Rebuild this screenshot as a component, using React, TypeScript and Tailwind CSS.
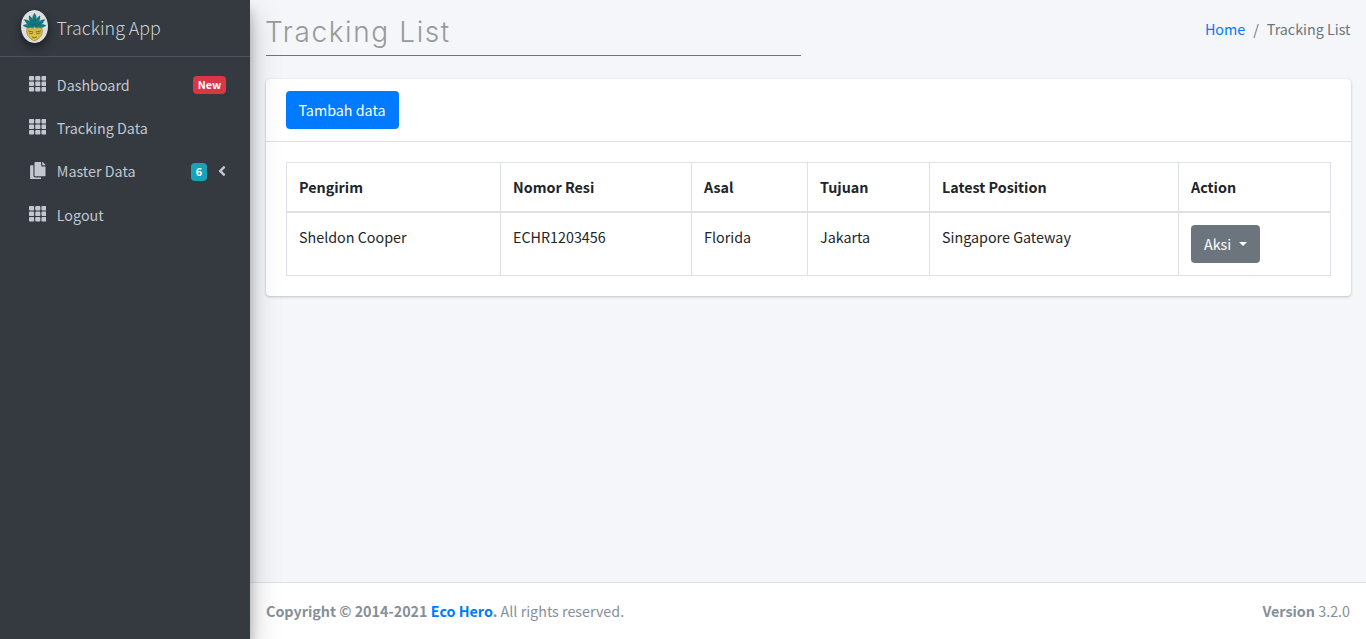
import { FaTh, FaCopy, FaAngleLeft } from "react-icons/fa";

const columns = ["Pengirim", "Nomor Resi", "Asal", "Tujuan", "Latest Position", "Action"];
const row = ["Sheldon Cooper", "ECHR1203456", "Florida", "Jakarta", "Singapore Gateway"];

function Logo() {
  return (
    <svg
      width="27"
      height="33"
      viewBox="0 0 27 33"
      className="rounded-full shadow-[0_3px_6px_rgba(0,0,0,0.3),0_6px_12px_rgba(0,0,0,0.2)]"
    >
      <ellipse cx="13.5" cy="16.5" rx="13.5" ry="16.5" fill="#dedede" />
      <g fill="#107b80" stroke="#0b5c62" strokeWidth="0.3">
        <path d="M13.5 3.2C11.4 5.5 10.7 9 13.5 16.5C16.3 9 15.6 5.5 13.5 3.2Z" />
        <path d="M8.1 5.8C7.5 9 8.7 12.8 13 16.5C13.3 11.5 11.5 7.5 8.1 5.8Z" />
        <path d="M18.9 5.8C19.5 9 18.3 12.8 14 16.5C13.7 11.5 15.5 7.5 18.9 5.8Z" />
        <path d="M3.2 9.6C4.6 13.2 8 16.3 13 17C11.2 12.5 7.4 9.8 3.2 9.6Z" />
        <path d="M23.8 9.6C22.4 13.2 19 16.3 14 17C15.8 12.5 19.6 9.8 23.8 9.6Z" />
        <path d="M2 15.6C5 18 9 18.5 13.5 17.2C10 13.8 6 13.2 2 15.6Z" />
        <path d="M25 15.6C22 18 18 18.5 13.5 17.2C17 13.8 21 13.2 25 15.6Z" />
      </g>
      <path
        d="M6 18.4L9.5 17.6L13.5 19.2L17.5 17.6L21 18.4L21.5 21.5L20.3 25.5L17 29.2L13.5 31L10 29.2L6.7 25.5L5.5 21.5Z"
        fill="#d9bf3f"
        stroke="#8f7c2b"
        strokeWidth="0.6"
      />
      <path
        d="M7 20.9L12.2 22M20 20.9L14.8 22M7.8 22.8Q9.8 25 12 22.8M15 22.8Q17.2 25 19.2 22.8M11 27Q13.5 28.6 16 27"
        fill="none"
        stroke="#5f5420"
        strokeWidth="0.75"
      />
    </svg>
  );
}

function NavItem({ label, copy, children }: { label: string; copy?: boolean; children?: React.ReactNode }) {
  return (
    <a href="#" className="flex h-[39.2px] items-center pr-4 pl-4 text-[#c2c7d0]">
      <span className="flex w-[26.6px] justify-center pb-[2px]">
        {copy ? <FaCopy size={17.6} /> : <FaTh size={17.6} />}
      </span>
      <span className="ml-[6.2px] flex-1 leading-6">{label}</span>
      {children}
    </a>
  );
}

export default function App() {
  return (
    <div className="flex h-[639px] overflow-hidden bg-[#f4f6f9] font-['Noto_Sans_CJK_SC',sans-serif] text-[14.32px] leading-6 text-[#212529]">
      <aside className="z-10 flex w-[250px] shrink-0 flex-col bg-[#343a40] shadow-[0_14px_28px_rgba(0,0,0,0.25),0_10px_10px_rgba(0,0,0,0.22)]">
        <a href="#" className="flex h-[57px] shrink-0 items-center border-b border-[#4b545c] pb-[3px] pl-[21px] text-[#ced2d6]">
          <Logo />
          <span className="ml-[8.6px] text-[17.85px] leading-[30px] font-light">Tracking App</span>
        </a>
        <nav className="flex flex-col gap-1 px-2 pt-[8.4px]">
          <NavItem label="Dashboard">
            <span className="flex h-[18px] w-[33px] items-center justify-center rounded bg-[#dc3545] text-[10.75px] leading-3 font-bold text-white">New</span>
          </NavItem>
          <NavItem label="Tracking Data" />
          <NavItem label="Master Data" copy>
            <span className="mt-px flex h-[18px] w-4 items-center justify-center rounded bg-[#17a2b8] text-[10.75px] leading-3 font-bold text-white">6</span>
            <FaAngleLeft size={16} className="-mr-1 ml-[7px]" />
          </NavItem>
          <NavItem label="Logout" />
        </nav>
      </aside>

      <div className="flex min-w-0 flex-1 flex-col">
        <header className="flex h-[79px] shrink-0 items-start justify-between pr-4 pl-4">
          <h1 className="h-14 w-[535px] border-b border-[#6c757d] pt-[14px] font-[Inter] text-[28px] leading-9 font-light tracking-[1.6px] text-[#999999] -indent-px">
            Tracking List
          </h1>
          <nav className="-mr-[0.5px] flex gap-2 pt-[17px] text-[#6c757d]">
            <a href="#" className="text-[#007bff]">Home</a>
            <span>/</span>
            <span>Tracking List</span>
          </nav>
        </header>

        <main className="flex-1 pr-[15px] pl-4">
          <section className="h-[217px] rounded bg-white shadow-[0_0_1px_rgba(0,0,0,0.125),0_1px_3px_rgba(0,0,0,0.2)]">
            <div className="h-[63px] border-b border-[#dfdfdf] px-5 pt-3">
              <button className="h-[38px] w-[113px] rounded bg-[#007bff] pr-px text-white">Tambah data</button>
            </div>
            <div className="px-5 pt-5">
              <table className="w-[1045px] table-fixed border-collapse text-left">
                <colgroup>
                  <col className="w-[214px]" />
                  <col className="w-[191px]" />
                  <col className="w-[116px]" />
                  <col className="w-[122px]" />
                  <col className="w-[249px]" />
                  <col className="w-[152px]" />
                </colgroup>
                <thead>
                  <tr className="h-[49px]">
                    {columns.map((name) => (
                      <th key={name} className="border border-b-2 border-[#dee2e6] px-3 pt-px pb-0 font-bold">{name}</th>
                    ))}
                  </tr>
                </thead>
                <tbody>
                  <tr className="h-[64px]">
                    {row.map((value) => (
                      <td key={value} className="border border-[#dee2e6] px-3 pt-3 align-top">{value}</td>
                    ))}
                    <td className="border border-[#dee2e6] px-3 pt-3 align-top">
                      <button className="flex h-[38px] w-[69px] items-center rounded bg-[#6c757d] pl-[13px] text-white">
                        Aksi
                        <span className="ml-2 border-x-[4.8px] border-t-[4.8px] border-x-transparent border-t-white" />
                      </button>
                    </td>
                  </tr>
                </tbody>
              </table>
            </div>
          </section>
        </main>

        <footer className="flex h-[57px] shrink-0 justify-between border-t border-[#dee2e6] bg-white px-4 pt-4 text-[#869099]">
          <div>
            <strong className="font-bold">
              Copyright © 2014-2021 <a href="#" className="text-[#007bff]">Eco Hero</a>.
            </strong>{" "}
            All rights reserved.
          </div>
          <div>
            <b className="font-bold">Version</b> 3.2.0
          </div>
        </footer>
      </div>
    </div>
  );
}
